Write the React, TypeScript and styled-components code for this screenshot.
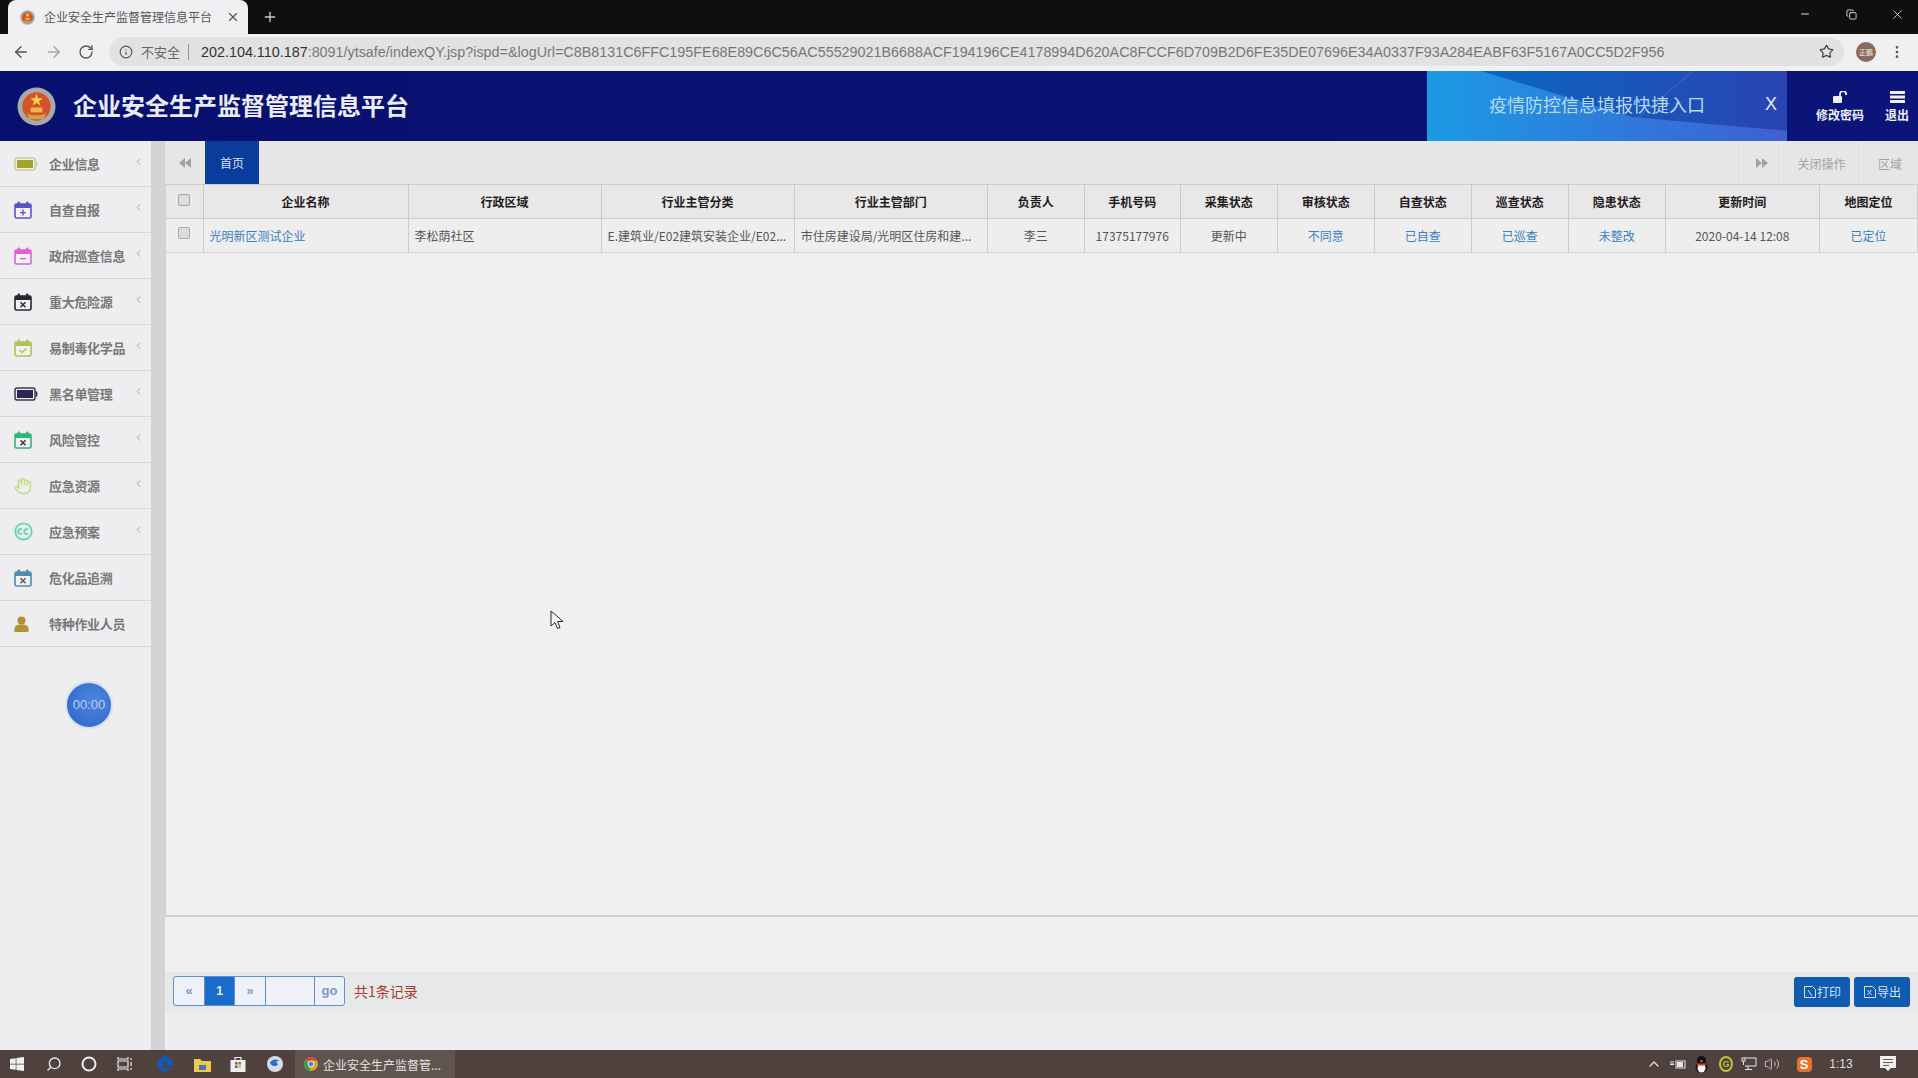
import React from "react";
import styled, { createGlobalStyle } from "styled-components";
import { ArrowLeft, ArrowRight, RotateCw, Info, Star, MoreVertical, X, Plus, Minus, Copy, ChevronLeft, Hand, Search, ChevronUp, Volume2 } from "lucide-react";
import { FaWindows, FaEdge } from "react-icons/fa";

const FONT = `"Noto Sans CJK SC", "Liberation Sans", sans-serif`;

const Global = createGlobalStyle`
  html, body { margin: 0; padding: 0; width: 1918px; height: 1078px; overflow: hidden; background: #eee; }
  * { box-sizing: border-box; }
  body { font-family: ${FONT}; }
`;

const Page = styled.div`
  position: relative;
  width: 1918px;
  height: 1078px;
  display: flex;
  flex-direction: column;
  overflow: hidden;
`;

const TabStrip = styled.div`
  height: 34px;
  flex: none;
  background: #0f0f0f;
  display: flex;
  align-items: flex-end;
  padding-left: 8px;
`;
const BrowserTab = styled.div`
  width: 240px;
  height: 34px;
  border-radius: 8px 8px 0 0;
  background: #f0f0f2;
  display: flex;
  align-items: center;
  padding: 0 8px 0 12px;
  gap: 9px;
`;
const TabTitle = styled.span`
  flex: 1;
  font-size: 12px;
  line-height: 16px;
  color: #555;
  white-space: nowrap;
`;
const NewTab = styled.div`
  width: 36px;
  height: 34px;
  margin-left: 4px;
  display: flex;
  align-items: center;
  justify-content: center;
  color: #c8c8c8;
`;
const WindowControls = styled.div`
  margin-left: auto;
  display: flex;
  align-self: flex-start;
  height: 28px;
  margin-right: -2px;
`;
const WindowButton = styled.div`
  width: 46px;
  display: flex;
  align-items: center;
  justify-content: center;
  color: #ddd;
`;

const AddressBar = styled.div`
  height: 37px;
  flex: none;
  background: #f0f0f0;
  display: flex;
  align-items: center;
  padding: 0 0 2px 12px;
  color: #555;
`;
const NavButton = styled.div<{ $dim?: boolean }>`
  width: 33px;
  display: flex;
  align-items: center;
  justify-content: flex-start;
  color: ${(p) => (p.$dim ? "#a5a5a5" : "#555")};
`;
const Omnibox = styled.div`
  width: 1735px;
  margin-left: -2px;
  height: 29px;
  border-radius: 15px;
  background: #e2e2e2;
  display: flex;
  align-items: center;
  padding: 0 10px;
  color: #555;
`;
const NotSecure = styled.span`
  font-size: 13px;
  line-height: 16px;
  color: #666;
  margin-left: 8px;
  padding-right: 8px;
  border-right: 1px solid #999;
`;
const UrlHost = styled.span`
  font-family: "Liberation Sans", sans-serif;
  font-size: 14.35px;
  color: #333;
  margin-left: 12px;
  white-space: nowrap;
`;
const UrlRest = styled.span`
  font-family: "Liberation Sans", sans-serif;
  font-size: 14.35px;
  color: #777;
  white-space: nowrap;
`;
const StarSlot = styled.div`
  margin-left: auto;
  display: flex;
  color: #444;
`;
const Avatar = styled.div`
  width: 20px;
  height: 20px;
  margin-left: 12px;
  border-radius: 50%;
  background: #8a6a5c;
  color: #eee;
  font-size: 7px;
  line-height: 20px;
  text-align: center;
`;
const MenuDots = styled.div`
  margin-left: 13px;
  display: flex;
  color: #555;
`;

const Header = styled.header`
  height: 70px;
  flex: none;
  background: linear-gradient(90deg, #08106f 0%, #0a1272 70%, #0b1478 100%);
  display: flex;
  align-items: center;
  padding-left: 17px;
`;
const Title = styled.h1`
  margin: -2px 0 0 17px;
  font-size: 24px;
  line-height: 32px;
  font-weight: 700;
  color: #e9ebf7;
  white-space: nowrap;
`;
const Banner = styled.div`
  position: relative;
  margin-left: auto;
  width: 360px;
  height: 70px;
  overflow: hidden;
  display: flex;
  align-items: center;
  padding-bottom: 4px;
`;
const BannerArt = styled.svg`
  position: absolute;
  inset: 0;
`;
const BannerText = styled.span`
  position: relative;
  margin-left: 62px;
  font-size: 18px;
  line-height: 24px;
  color: #b5d8f3;
  white-space: nowrap;
`;
const BannerClose = styled.span`
  position: relative;
  margin-left: 60px;
  font-family: "Liberation Sans", sans-serif;
  font-size: 18px;
  color: #e2ecfb;
`;
const HeaderActions = styled.div`
  width: 131px;
  display: flex;
  padding-left: 29px;
  gap: 21px;
`;
const HeaderAction = styled.div`
  display: flex;
  flex-direction: column;
  align-items: center;
  gap: 5px;
  color: #eef0fa;
  font-size: 12px;
  line-height: 14px;
  font-weight: 700;
  white-space: nowrap;
`;

const Main = styled.div`
  flex: 1;
  min-height: 0;
  display: flex;
`;
const Sidebar = styled.nav`
  width: 151px;
  flex: none;
  background: #eeeef0;
  display: flex;
  flex-direction: column;
`;
const MenuRow = styled.div`
  height: 46px;
  flex: none;
  display: flex;
  align-items: center;
  padding-left: 14px;
  border-bottom: 1px solid #d8d8d8;
  position: relative;
`;
const MenuIcon = styled.div`
  width: 35px;
  flex: none;
  display: flex;
  align-items: center;
`;
const MenuLabel = styled.span`
  font-size: 13px;
  letter-spacing: -0.3px;
  line-height: 18px;
  font-weight: 700;
  color: #787878;
  white-space: nowrap;
`;
const MenuChevron = styled.div`
  position: absolute;
  right: 7px;
  top: 15px;
  display: flex;
  color: #999;
`;
const Timer = styled.div`
  width: 44px;
  height: 44px;
  margin: 36px 0 0 67px;
  border-radius: 50%;
  background: radial-gradient(circle at 60% 40%, #4d86e0, #2f62c8);
  box-shadow: 0 0 0 2px #d5e2f4;
  color: #b9d0f6;
  font-family: "Liberation Sans", sans-serif;
  font-size: 13px;
  line-height: 44px;
  text-align: center;
`;
const Gutter = styled.div`
  width: 14px;
  flex: none;
  background: #d3d5d5;
`;
const Content = styled.main`
  flex: 1;
  min-width: 0;
  display: flex;
  flex-direction: column;
  background: #efeef1;
`;
const TabRow = styled.div`
  height: 43px;
  flex: none;
  background: #e6e6e6;
  display: flex;
`;
const ScrollLeft = styled.div`
  width: 40px;
  display: flex;
  align-items: center;
  justify-content: center;
  padding-top: 1px;
`;
const HomeTab = styled.div`
  width: 54px;
  background: #0a3c9c;
  color: #d8e0f2;
  font-size: 12px;
  line-height: 43px;
  text-align: center;
`;
const TabTools = styled.div`
  margin-left: auto;
  display: flex;
`;
const ToolCell = styled.div<{ $w: number }>`
  width: ${(p) => p.$w}px;
  border-left: 1px solid #eeeeee;
  color: #a3a3a3;
  font-size: 12px;
  padding-top: 1px;
  display: flex;
  align-items: center;
  justify-content: center;
`;

const GridArea = styled.div`
  height: 733px;
  flex: none;
  border-left: 1px solid #d0d0d0;
  border-bottom: 2px solid #cfd2d0;
  background: #f0eff2;
  overflow: hidden;
`;
const Table = styled.table`
  width: 1752px;
  table-layout: fixed;
  border-collapse: collapse;
`;
const Th = styled.th`
  height: 34px;
  padding: 0;
  background: #e8e8e8;
  border: 1px solid #cccccc;
  border-left: 0;
  font-size: 12px;
  line-height: 16px;
  font-weight: 700;
  color: #231a1e;
  text-align: center;
`;
const Td = styled.td<{ $left?: boolean; $link?: boolean }>`
  height: 34px;
  padding: 0 6px;
  background: #eeeeef;
  border-right: 1px solid #cccccc;
  border-bottom: 1px solid #d2d2d2;
  font-size: 12px;
  line-height: 16px;
  color: ${(p) => (p.$link ? "#3a7fc0" : "#555")};
  text-align: ${(p) => (p.$left ? "left" : "center")};
  white-space: nowrap;
  overflow: hidden;
  text-overflow: ellipsis;
`;
const CheckBox = styled.span<{ $shift: number }>`
  display: block;
  width: 12px;
  height: 12px;
  margin: ${(p) => p.$shift}px auto 0;
  border: 1px solid #a8a8a8;
  border-radius: 2px;
  background: #dcdcdc;
`;

const FooterGap = styled.div`
  height: 55px;
  flex: none;
`;
const PagerBar = styled.div`
  height: 41px;
  flex: none;
  background: #e7e8e9;
  display: flex;
  align-items: center;
  padding: 0 8px;
`;
const Pager = styled.div`
  display: flex;
  height: 30px;
  margin-top: -4px;
`;
const PageCell = styled.div<{ $active?: boolean; $w: number }>`
  width: ${(p) => p.$w}px;
  border: 1px solid #5f8fce;
  margin-left: -1px;
  background: ${(p) => (p.$active ? "#1a6ccb" : "#eef2f8")};
  color: ${(p) => (p.$active ? "#dce9f8" : "#7b98cf")};
  font-family: "Liberation Sans", sans-serif;
  font-size: 13px;
  font-weight: 700;
  line-height: 28px;
  text-align: center;
  &:first-child { border-radius: 3px 0 0 3px; margin-left: 0; }
  &:last-child { border-radius: 0 3px 3px 0; }
`;
const RecordCount = styled.span`
  margin-left: 9px;
  margin-top: -4px;
  font-size: 14px;
  line-height: 18px;
  color: #a83c28;
`;
const ActionGroup = styled.div`
  margin-left: auto;
  display: flex;
  gap: 4px;
  margin-top: -2px;
`;
const ActionButton = styled.div`
  width: 56px;
  height: 30px;
  border-radius: 3px;
  background: #0f5cb0;
  color: #cfe0f4;
  font-size: 12px;
  display: flex;
  align-items: center;
  justify-content: center;
`;
const BottomGap = styled.div`
  flex: 1;
  background: #eeeef1;
`;

const Taskbar = styled.footer`
  height: 28px;
  flex: none;
  background: #4f423e;
  display: flex;
  align-items: center;
`;
const TaskSlot = styled.div<{ $w: number }>`
  width: ${(p) => p.$w}px;
  height: 28px;
  flex: none;
  display: flex;
  align-items: center;
  justify-content: center;
  color: #eee;
`;
const ActiveTask = styled.div`
  width: 160px;
  height: 28px;
  margin-left: 1px;
  background: #5f5450;
  display: flex;
  align-items: center;
  gap: 5px;
  padding-left: 9px;
  color: #e6e2df;
  font-size: 12px;
  white-space: nowrap;
`;
const Tray = styled.div`
  margin-left: auto;
  display: flex;
  align-items: center;
`;
const TrayGlyph = styled.span`
  color: #b8c13a;
  border: 2px solid #b8c13a;
  border-radius: 50%;
  width: 14px;
  height: 16px;
  font-family: "Liberation Sans", sans-serif;
  font-size: 9px;
  font-weight: 700;
  line-height: 12px;
  text-align: center;
`;
const SogouGlyph = styled.span`
  width: 15px;
  height: 15px;
  border-radius: 4px;
  background: #e8722a;
  color: #fff;
  font-family: "Liberation Sans", sans-serif;
  font-size: 13px;
  font-weight: 700;
  line-height: 15px;
  text-align: center;
`;
const Clock = styled.span`
  font-family: "Liberation Sans", sans-serif;
  font-size: 12px;
  color: #ddd;
`;
const CursorArt = styled.svg`
  position: absolute;
  left: 550px;
  top: 610px;
`;

const Emblem = ({ size }: { size: number }) => (
  <svg width={size} height={size} viewBox="0 0 40 40" style={{ flex: "none" }}>
    <circle cx="20" cy="20" r="19.5" fill="#a9aaa8" />
    <circle cx="20" cy="20" r="14.5" fill="#d4532b" />
    <path d="M20 7l1.6 4.6h4.8l-3.9 2.9 1.5 4.6-4-2.8-4 2.8 1.5-4.6-3.9-2.9h4.8z" fill="#f2cf4a" />
    <path d="M10 27c6 3 14 3 20 0l-3 6H13z" fill="#c9a84a" />
    <rect x="14" y="21" width="12" height="5" fill="#e8b84a" />
  </svg>
);

const Battery = ({ color, edge }: { color: string; edge: string }) => (
  <svg width="24" height="14" viewBox="0 0 24 14">
    <rect x="1" y="1" width="20" height="12" rx="2" fill="#eeeef0" stroke={edge} strokeWidth="1.5" />
    <rect x="3" y="3" width="16" height="8" fill={color} />
    <path d="M22 4.5c1 .8 1 4.2 0 5" fill="none" stroke={edge} strokeWidth="1.5" />
  </svg>
);

const Calendar = ({ color, mark, markColor }: { color: string; mark: "plus" | "minus" | "x" | "check"; markColor?: string }) => (
  <svg width="18" height="18" viewBox="0 0 18 18">
    <rect x="1" y="3" width="16" height="14" rx="1.5" fill="#f2f2f4" stroke={color} strokeWidth="1.6" />
    <rect x="1" y="3" width="16" height="4" fill={color} />
    <rect x="3.6" y="0.6" width="2.4" height="4.4" rx="1" fill={color} />
    <rect x="12" y="0.6" width="2.4" height="4.4" rx="1" fill={color} />
    <g stroke={markColor ?? color} strokeWidth="1.4" fill="none">
      {mark === "plus" && <path d="M9 8.6v6M6 11.6h6" />}
      {mark === "minus" && <path d="M6 11.6h6" />}
      {mark === "x" && <path d="M6.5 9.2l5 5M11.5 9.2l-5 5" />}
      {mark === "check" && <path d="M5.5 11l2.6 2.6 4.6-4.4" />}
    </g>
  </svg>
);

const CcIcon = () => (
  <svg width="19" height="19" viewBox="0 0 19 19" fill="none" stroke="#66d8a8" strokeWidth="1.8">
    <circle cx="9.5" cy="9.5" r="8.2" />
    <path d="M8 7.6a2.4 2.4 0 1 0 0 3.8M14 7.6a2.4 2.4 0 1 0 0 3.8" />
  </svg>
);

const UserIcon = () => (
  <svg width="15" height="16" viewBox="0 0 15 16" fill="#b09236">
    <circle cx="7.5" cy="4.4" r="4" />
    <path d="M0.5 16v-3c0-3 2.5-4.4 7-4.4s7 1.4 7 4.4v3z" />
  </svg>
);

const ChromeLogo = ({ size }: { size: number }) => (
  <svg width={size} height={size} viewBox="0 0 16 16">
    <circle cx="8" cy="8" r="8" fill="#d9a62e" />
    <path d="M8 0a8 8 0 0 1 6.9 4H8a4 4 0 0 0-3.6 2.2L2 2.6A8 8 0 0 1 8 0z" fill="#d6493a" />
    <path d="M2 2.6l3.4 7.4 2.4 6A8 8 0 0 1 2 2.6z" fill="#3f9c4e" />
    <circle cx="8" cy="8" r="3.6" fill="#fff" />
    <circle cx="8" cy="8" r="2.8" fill="#4a84d8" />
  </svg>
);

const DoubleArrow = ({ dir }: { dir: "left" | "right" }) => (
  <svg width="12" height="10" viewBox="0 0 12 10" fill="#a0a0a0" style={{ transform: dir === "left" ? "none" : "scaleX(-1)" }}>
    <path d="M6 0v10L0 5zM12 0v10L6 5z" />
  </svg>
);

const menu: { label: string; icon: React.ReactNode; chevron: boolean }[] = [
  { label: "企业信息", chevron: true, icon: <Battery color="#a3a42c" edge="#c9cf8e" /> },
  { label: "自查自报", chevron: true, icon: <Calendar color="#5b52cf" mark="plus" /> },
  { label: "政府巡查信息", chevron: true, icon: <Calendar color="#d964d2" mark="minus" /> },
  { label: "重大危险源", chevron: true, icon: <Calendar color="#2a2730" mark="x" /> },
  { label: "易制毒化学品", chevron: true, icon: <Calendar color="#b4c052" mark="check" /> },
  { label: "黑名单管理", chevron: true, icon: <Battery color="#2f2555" edge="#3c3a4a" /> },
  { label: "风险管控", chevron: true, icon: <Calendar color="#2fb574" mark="x" markColor="#333" /> },
  { label: "应急资源", chevron: true, icon: <Hand size={18} color="#b8de7e" strokeWidth={1.8} /> },
  { label: "应急预案", chevron: true, icon: <CcIcon /> },
  { label: "危化品追溯", chevron: false, icon: <Calendar color="#4d8db5" mark="x" markColor="#555" /> },
  { label: "特种作业人员", chevron: false, icon: <UserIcon /> },
];

const columns: { title: string; width: number }[] = [
  { title: "企业名称", width: 205 },
  { title: "行政区域", width: 193 },
  { title: "行业主管分类", width: 193 },
  { title: "行业主管部门", width: 193 },
  { title: "负责人", width: 97 },
  { title: "手机号码", width: 96 },
  { title: "采集状态", width: 97 },
  { title: "审核状态", width: 97 },
  { title: "自查状态", width: 97 },
  { title: "巡查状态", width: 97 },
  { title: "隐患状态", width: 97 },
  { title: "更新时间", width: 154 },
  { title: "地图定位", width: 98 },
];

const row: { text: string; left?: boolean; link?: boolean }[] = [
  { text: "光明新区测试企业", left: true, link: true },
  { text: "李松荫社区", left: true },
  { text: "E.建筑业/E02建筑安装企业/E02...", left: true },
  { text: "市住房建设局/光明区住房和建...", left: true },
  { text: "李三" },
  { text: "17375177976" },
  { text: "更新中" },
  { text: "不同意", link: true },
  { text: "已自查", link: true },
  { text: "已巡查", link: true },
  { text: "未整改", link: true },
  { text: "2020-04-14 12:08" },
  { text: "已定位", link: true },
];

const URL_REST =
  ":8091/ytsafe/indexQY.jsp?ispd=&logUrl=C8B8131C6FFC195FE68E89C6C56AC55529021B6688ACF194196CE4178994D620AC8FCCF6D709B2D6FE35DE07696E34A0337F93A284EABF63F5167A0CC5D2F956";

export default function App() {
  return (
    <Page>
      <Global />
      <TabStrip>
        <BrowserTab>
          <Emblem size={15} />
          <TabTitle>企业安全生产监督管理信息平台</TabTitle>
          <X size={14} color="#555" />
        </BrowserTab>
        <NewTab>
          <Plus size={16} />
        </NewTab>
        <WindowControls>
          <WindowButton>
            <Minus size={12} />
          </WindowButton>
          <WindowButton>
            <Copy size={11} />
          </WindowButton>
          <WindowButton>
            <X size={15} strokeWidth={1.4} />
          </WindowButton>
        </WindowControls>
      </TabStrip>

      <AddressBar>
        <NavButton>
          <ArrowLeft size={18} />
        </NavButton>
        <NavButton $dim>
          <ArrowRight size={18} />
        </NavButton>
        <NavButton>
          <RotateCw size={16} />
        </NavButton>
        <Omnibox>
          <Info size={14} />
          <NotSecure>不安全</NotSecure>
          <UrlHost>202.104.110.187</UrlHost>
          <UrlRest>{URL_REST}</UrlRest>
          <StarSlot>
            <Star size={15} />
          </StarSlot>
        </Omnibox>
        <Avatar>正鹏</Avatar>
        <MenuDots>
          <MoreVertical size={16} />
        </MenuDots>
      </AddressBar>

      <Header>
        <Emblem size={39} />
        <Title>企业安全生产监督管理信息平台</Title>
        <Banner>
          <BannerArt width="360" height="70" viewBox="0 0 360 70">
            <defs>
              <linearGradient id="bannerBase" x1="0" x2="1" y1="0" y2="0">
                <stop offset="0" stopColor="#1c9ae4" />
                <stop offset="1" stopColor="#3f5fd2" />
              </linearGradient>
              <linearGradient id="bannerDark" x1="0" x2="1" y1="0" y2="0">
                <stop offset="0" stopColor="#0a66c2" />
                <stop offset="1" stopColor="#2a44b2" />
              </linearGradient>
            </defs>
            <rect width="360" height="70" fill="url(#bannerBase)" />
            <path d="M54 0L205 46 360 60V0z" fill="url(#bannerDark)" />
            <path d="M200 56L266 0" stroke="#4a70c8" strokeOpacity="0.5" strokeWidth="1.5" fill="none" />
          </BannerArt>
          <BannerText>疫情防控信息填报快捷入口</BannerText>
          <BannerClose>X</BannerClose>
        </Banner>
        <HeaderActions>
          <HeaderAction>
            <svg width="14" height="12" viewBox="0 0 14 12" fill="#eef0fa">
              <rect x="0" y="5" width="9" height="7" rx="1" />
              <path d="M7 5V3a3 3 0 0 1 6 0v1" fill="none" stroke="#eef0fa" strokeWidth="1.8" />
            </svg>
            修改密码
          </HeaderAction>
          <HeaderAction>
            <svg width="15" height="12" viewBox="0 0 15 12" fill="#eef0fa">
              <rect x="0" y="0" width="15" height="3" />
              <rect x="0" y="4.5" width="15" height="3" />
              <rect x="0" y="9" width="15" height="3" />
            </svg>
            退出
          </HeaderAction>
        </HeaderActions>
      </Header>

      <Main>
        <Sidebar>
          {menu.map((m) => (
            <MenuRow key={m.label}>
              <MenuIcon>{m.icon}</MenuIcon>
              <MenuLabel>{m.label}</MenuLabel>
              {m.chevron && (
                <MenuChevron>
                  <ChevronLeft size={11} strokeWidth={2} />
                </MenuChevron>
              )}
            </MenuRow>
          ))}
          <Timer>00:00</Timer>
        </Sidebar>
        <Gutter />
        <Content>
          <TabRow>
            <ScrollLeft>
              <DoubleArrow dir="left" />
            </ScrollLeft>
            <HomeTab>首页</HomeTab>
            <TabTools>
              <ToolCell $w={40}>
                <DoubleArrow dir="right" />
              </ToolCell>
              <ToolCell $w={80}>关闭操作</ToolCell>
              <ToolCell $w={57}>区域</ToolCell>
            </TabTools>
          </TabRow>
          <GridArea>
            <Table>
              <colgroup>
                <col style={{ width: 37 }} />
                {columns.map((c) => (
                  <col key={c.title} style={{ width: c.width }} />
                ))}
              </colgroup>
              <thead>
                <tr>
                  <Th>
                    <CheckBox $shift={-3} />
                  </Th>
                  {columns.map((c) => (
                    <Th key={c.title}>{c.title}</Th>
                  ))}
                </tr>
              </thead>
              <tbody>
                <tr>
                  <Td>
                    <CheckBox $shift={-5} />
                  </Td>
                  {row.map((c) => (
                    <Td key={c.text} $left={c.left} $link={c.link}>
                      {c.text}
                    </Td>
                  ))}
                </tr>
              </tbody>
            </Table>
          </GridArea>
          <FooterGap />
          <PagerBar>
            <Pager>
              <PageCell $w={32}>«</PageCell>
              <PageCell $w={31} $active>
                1
              </PageCell>
              <PageCell $w={32}>»</PageCell>
              <PageCell $w={50} />
              <PageCell $w={31}>go</PageCell>
            </Pager>
            <RecordCount>共1条记录</RecordCount>
            <ActionGroup>
              <ActionButton>
                <svg width="14" height="14" viewBox="0 0 14 14" fill="none" stroke="#cfe0f4">
                  <path d="M1.5 1.5h8l3 3v8h-11zM5 5l4 6" />
                </svg>
                打印
              </ActionButton>
              <ActionButton>
                <svg width="14" height="14" viewBox="0 0 14 14" fill="none" stroke="#cfe0f4">
                  <path d="M1.5 1.5h8l3 3v8h-11zM4.5 5l4 5M8.5 5l-4 5" />
                </svg>
                导出
              </ActionButton>
            </ActionGroup>
          </PagerBar>
          <BottomGap />
        </Content>
      </Main>

      <Taskbar>
        <TaskSlot $w={34}>
          <FaWindows size={16} color="#f0f0f0" />
        </TaskSlot>
        <TaskSlot $w={40}>
          <Search size={16} style={{ transform: "scaleX(-1)" }} />
        </TaskSlot>
        <TaskSlot $w={30}>
          <svg width="16" height="16" viewBox="0 0 16 16" fill="none" stroke="#eee" strokeWidth="2">
            <circle cx="8" cy="8" r="6.5" />
          </svg>
        </TaskSlot>
        <TaskSlot $w={42}>
          <svg width="16" height="14" viewBox="0 0 16 14" fill="none" stroke="#eee" strokeWidth="1.2">
            <path d="M1 0v2h10V0M1 14v-2h10v2M1 4h10v6H1zM14 1v2M14 5v4M14 11v2" />
          </svg>
        </TaskSlot>
        <TaskSlot $w={38}>
          <FaEdge size={16} color="#1558b0" />
        </TaskSlot>
        <TaskSlot $w={36}>
          <svg width="17" height="15" viewBox="0 0 17 15">
            <path d="M0 2h6l2 2h9v11H0z" fill="#f0c94a" />
            <rect x="5" y="8" width="7" height="5" fill="#3f78b8" />
          </svg>
        </TaskSlot>
        <TaskSlot $w={36}>
          <svg width="16" height="16" viewBox="0 0 16 16">
            <rect x="0.5" y="4" width="15" height="12" fill="#eee" />
            <path d="M5 4V1.5h6V4" fill="none" stroke="#eee" strokeWidth="1.2" />
            <rect x="5" y="6" width="2.6" height="2.6" fill="#d6493a" />
            <rect x="8.4" y="6" width="2.6" height="2.6" fill="#5aa03f" />
            <rect x="5" y="9.4" width="2.6" height="2.6" fill="#3f78c8" />
            <rect x="8.4" y="9.4" width="2.6" height="2.6" fill="#e6b93a" />
          </svg>
        </TaskSlot>
        <TaskSlot $w={38}>
          <svg width="16" height="16" viewBox="0 0 16 16">
            <circle cx="8" cy="8" r="8" fill="#d6dce8" />
            <path d="M3 7c1-3 6-5 9-2l-3 .5 2 3c-2 2-5 2-7 0z" fill="#2f6fc8" />
          </svg>
        </TaskSlot>
        <ActiveTask>
          <ChromeLogo size={14} />
          企业安全生产监督管...
        </ActiveTask>
        <Tray>
          <TaskSlot $w={28}>
            <ChevronUp size={16} color="#ddd" />
          </TaskSlot>
          <TaskSlot $w={20}>
            <svg width="16" height="11" viewBox="0 0 16 11" fill="none" stroke="#e6e6e6">
              <rect x="6" y="2" width="9" height="7" />
              <rect x="7.5" y="3.5" width="5" height="4" fill="#e6e6e6" />
              <path d="M0 5.5h4M1 2v3M3 2v3" />
            </svg>
          </TaskSlot>
          <TaskSlot $w={26}>
            <svg width="15" height="17" viewBox="0 0 15 17">
              <ellipse cx="7.5" cy="11" rx="6" ry="6" fill="#111" />
              <ellipse cx="7.5" cy="12" rx="4" ry="4.6" fill="#f4f4f4" />
              <circle cx="7.5" cy="4.5" r="4.5" fill="#111" />
              <path d="M2.5 7.5h10l-.5 2h-9z" fill="#d8382a" />
              <path d="M6 4.5h3l-1.5 2z" fill="#e8b030" />
            </svg>
          </TaskSlot>
          <TaskSlot $w={24}>
            <TrayGlyph>G</TrayGlyph>
          </TaskSlot>
          <TaskSlot $w={22}>
            <svg width="16" height="14" viewBox="0 0 16 14" fill="none" stroke="#e6e6e6">
              <path d="M4 1h11v8H4M7 9v3M4 12.5h7" />
              <rect x="1" y="1" width="3" height="3" />
              <path d="M2.5 4v4" />
            </svg>
          </TaskSlot>
          <TaskSlot $w={24}>
            <Volume2 size={16} color="#ccc" strokeWidth={1.4} />
          </TaskSlot>
          <TaskSlot $w={40}>
            <SogouGlyph>S</SogouGlyph>
          </TaskSlot>
          <TaskSlot $w={34}>
            <Clock>1:13</Clock>
          </TaskSlot>
          <TaskSlot $w={60}>
            <svg width="16" height="16" viewBox="0 0 16 16">
              <path d="M0 0h16v12h-5l-3 3-3-3H0z" fill="#eee" />
              <path d="M3 3.5h10M3 6.5h10M3 9.5h6" stroke="#6a5d58" strokeWidth="1" />
            </svg>
          </TaskSlot>
        </Tray>
      </Taskbar>

      <CursorArt width="14" height="20" viewBox="0 0 14 20">
        <path d="M1 1v15l4-3.5 2.5 6 2.5-1-2.5-6H13z" fill="#fff" stroke="#222" />
      </CursorArt>
    </Page>
  );
}
